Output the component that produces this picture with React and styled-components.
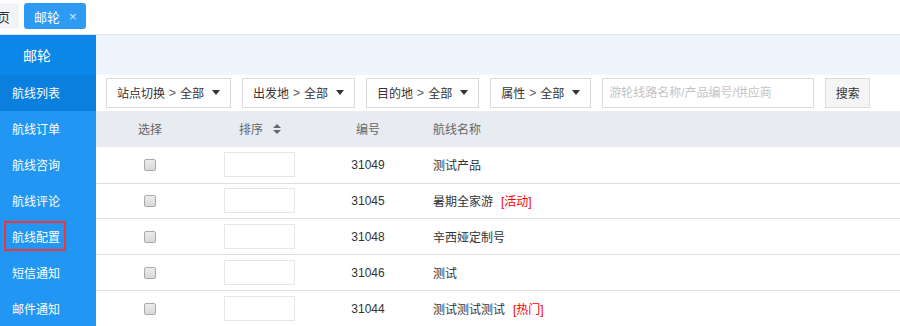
import React from 'react';
import styled, { createGlobalStyle } from 'styled-components';

const GlobalStyle = createGlobalStyle`
  html, body {
    margin: 0;
    padding: 0;
    background: #fff;
    font-family: "Liberation Sans", "Noto Sans CJK SC", sans-serif;
    font-size: 12px;
    color: #333;
    overflow: hidden;
  }
  * { box-sizing: border-box; }
`;

const Page = styled.div`
  width: 900px;
  height: 326px;
  overflow: hidden;
`;

const TabBar = styled.div`
  height: 35px;
  display: flex;
  align-items: flex-start;
  gap: 5px;
  padding-top: 3px;
  border-bottom: 1px solid #dce7f3;
  overflow: hidden;
`;

const Tab = styled.div`
  height: 26px;
  display: flex;
  align-items: center;
  gap: 9px;
  padding: 0 9px 0 10px;
  border-radius: 3px;
  font-size: 13px;
  white-space: nowrap;
  background: ${({ $active }) => ($active ? '#2d9bf4' : '#f1f3f6')};
  color: ${({ $active }) => ($active ? '#fff' : '#333')};
  margin-left: ${({ $offset }) => $offset || 0}px;
`;

const Close = styled.span`
  font-size: 13px;
  color: #d8ecfd;
`;

const Main = styled.div`
  display: flex;
  height: 291px;
`;

const Sidebar = styled.nav`
  width: 96px;
  flex-shrink: 0;
  background: #2196f3;
  display: flex;
  flex-direction: column;
`;

const SideHead = styled.div`
  height: 40px;
  background: #0b87e9;
  color: #fff;
  font-size: 14px;
  display: flex;
  align-items: center;
  padding-left: 23px;
`;

const NavItem = styled.div`
  height: 36px;
  display: flex;
  align-items: center;
  padding-left: 12px;
  color: #fff;
  font-size: 12px;
  background: ${({ $active }) => ($active ? '#0a7fdd' : 'transparent')};
`;

const Marked = styled.span`
  margin-left: -8px;
  padding: 5px 4px 4px 6px;
  border: 2px solid #f2373a;
`;

const Content = styled.div`
  flex: 1;
  display: flex;
  flex-direction: column;
  min-width: 0;
`;

const Banner = styled.div`
  height: 40px;
  background: #eef5fd;
`;

const FilterBar = styled.div`
  height: 36px;
  display: flex;
  align-items: flex-start;
  gap: 11px;
  padding: 3px 0 0 10px;
`;

const Dropdown = styled.div`
  height: 30px;
  display: flex;
  align-items: center;
  padding: 0 10px 0 10px;
  border: 1px solid #dcdcdc;
  font-size: 12px;
  color: #333;
  white-space: nowrap;
`;

const Gt = styled.span`
  margin: 0 4px;
  color: #555;
`;

const Caret = styled.span`
  margin-left: 8px;
  width: 0;
  height: 0;
  border-left: 4px solid transparent;
  border-right: 4px solid transparent;
  border-top: 5px solid #333;
`;

const Search = styled.input`
  width: 212px;
  height: 30px;
  border: 1px solid #dcdcdc;
  padding: 0 6px;
  font: inherit;
  font-size: 12px;
  outline: none;
  &::placeholder { color: #c4c4c4; }
`;

const Button = styled.button`
  width: 45px;
  height: 30px;
  border: 1px solid #dcdcdc;
  background: #f5f5f5;
  font: inherit;
  font-size: 12px;
  color: #333;
  padding: 0;
`;

const Row = styled.div`
  height: 36px;
  display: grid;
  grid-template-columns: 108px 112px 104px 1fr;
  align-items: center;
  background: ${({ $head }) => ($head ? '#e8ebf0' : '#fff')};
  color: ${({ $head }) => ($head ? '#666' : '#333')};
  border-top: ${({ $line }) => ($line ? '1px solid #dedede' : 'none')};
`;

const Cell = styled.div`
  display: flex;
  align-items: center;
  justify-content: ${({ $left }) => ($left ? 'flex-start' : 'center')};
  padding-left: ${({ $left }) => ($left ? '13px' : '0')};
`;

const Check = styled.span`
  width: 12px;
  height: 12px;
  border: 1px solid #a9a9a9;
  border-radius: 2px;
  background: linear-gradient(#ececec, #d9d9d9);
`;

const SortInput = styled.div`
  width: 71px;
  height: 25px;
  border: 1px solid #e6e6e6;
  margin-left: -1px;
`;

const SortIcon = styled.svg`
  margin-left: 10px;
`;

const Tag = styled.span`
  color: #f00;
  margin-left: 8px;
`;

const navItems = ['航线列表', '航线订单', '航线咨询', '航线评论', '航线配置', '短信通知', '邮件通知'];

const filters = [
  ['站点切换', '全部'],
  ['出发地', '全部'],
  ['目的地', '全部'],
  ['属性', '全部'],
];

const rows = [
  { id: 31049, name: '测试产品' },
  { id: 31045, name: '暑期全家游', tag: '[活动]' },
  { id: 31048, name: '辛西娅定制号' },
  { id: 31046, name: '测试' },
  { id: 31044, name: '测试测试测试', tag: '[热门]' },
];

export default function App() {
  return (
    <Page>
      <GlobalStyle />
      <TabBar>
        <Tab $offset={-26}>首页</Tab>
        <Tab $active>
          邮轮<Close>×</Close>
        </Tab>
      </TabBar>
      <Main>
        <Sidebar>
          <SideHead>邮轮</SideHead>
          {navItems.map((label, i) => (
            <NavItem key={label} $active={i === 0}>
              {label === '航线配置' ? <Marked>{label}</Marked> : label}
            </NavItem>
          ))}
        </Sidebar>
        <Content>
          <Banner />
          <FilterBar>
            {filters.map(([k, v]) => (
              <Dropdown key={k}>
                {k}
                <Gt>&gt;</Gt>
                {v}
                <Caret />
              </Dropdown>
            ))}
            <Search placeholder="游轮线路名称/产品编号/供应商" />
            <Button>搜索</Button>
          </FilterBar>
          <Row $head>
            <Cell>选择</Cell>
            <Cell>
              排序
              <SortIcon width="8" height="10" viewBox="0 0 8 10">
                <path d="M4 0 L8 4 L0 4 Z" fill="#666" />
                <path d="M0 6 L8 6 L4 10 Z" fill="#666" />
              </SortIcon>
            </Cell>
            <Cell>编号</Cell>
            <Cell $left>航线名称</Cell>
          </Row>
          {rows.map((r, i) => (
            <Row key={r.id} $line={i > 0}>
              <Cell><Check /></Cell>
              <Cell><SortInput /></Cell>
              <Cell>{r.id}</Cell>
              <Cell $left>
                {r.name}
                {r.tag && <Tag>{r.tag}</Tag>}
              </Cell>
            </Row>
          ))}
        </Content>
      </Main>
    </Page>
  );
}
